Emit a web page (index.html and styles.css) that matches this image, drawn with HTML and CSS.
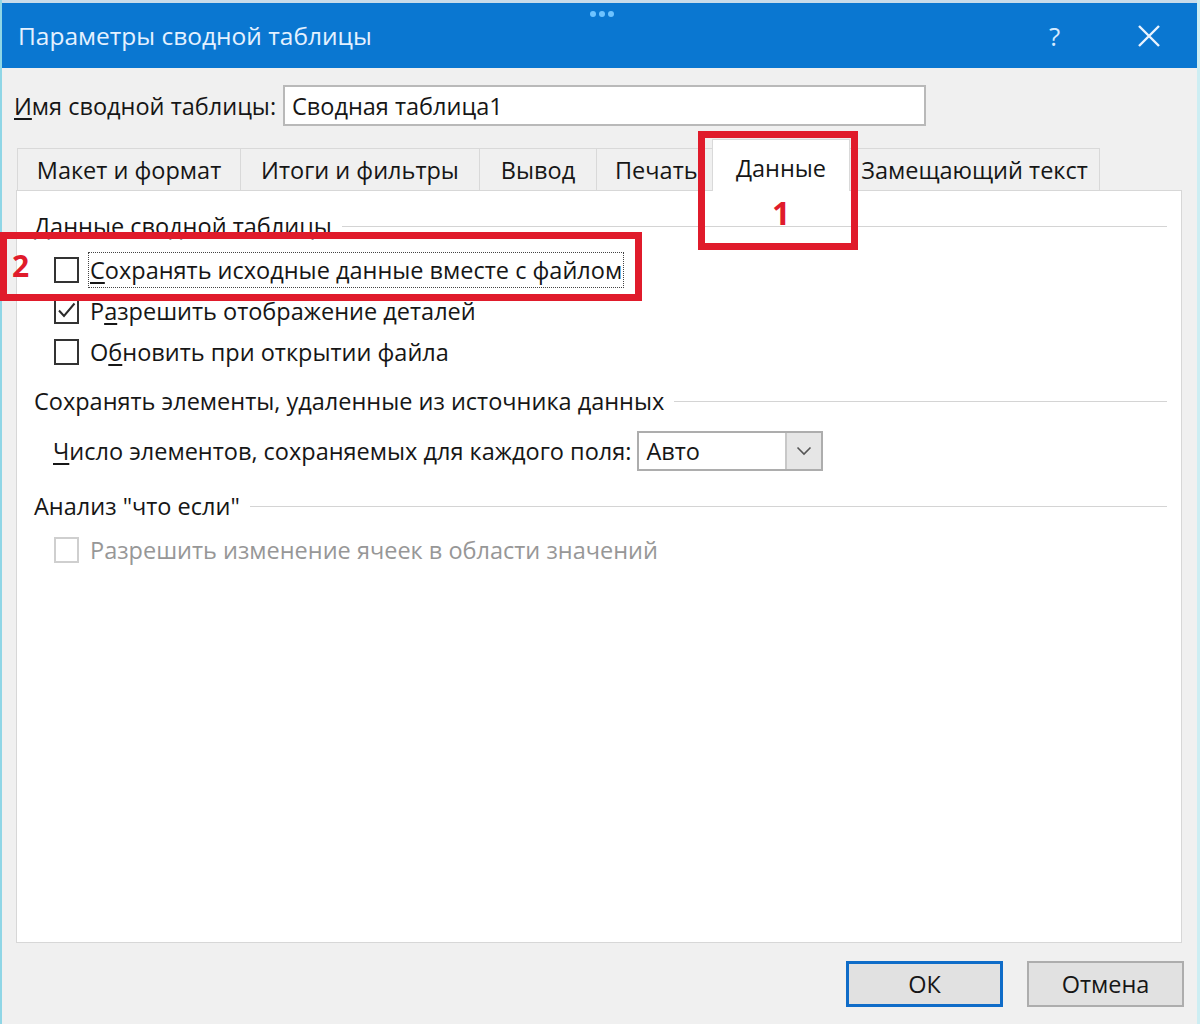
FILE: index.html
```html
<!DOCTYPE html>
<html lang="ru">
<head>
<meta charset="utf-8">
<title>Параметры сводной таблицы</title>
<link rel="stylesheet" href="styles.css">
</head>
<body>
<div class="window">
  <div class="titlebar">
    <span class="title">Параметры сводной таблицы</span>
    <span class="dots"><i></i><i></i><i></i></span>
    <span class="tb-help">?</span>
    <span class="tb-close">
      <svg width="24" height="24" viewBox="0 0 24 24"><path d="M2 2 L22 22 M22 2 L2 22" stroke="#eaf4ff" stroke-width="2.4" fill="none"/></svg>
    </span>
  </div>

  <div class="name-row">
    <span class="name-label"><u>И</u>мя сводной таблицы:</span>
    <div class="name-input">Сводная таблица1</div>
  </div>

  <div class="tabs">
    <div class="tab t1">Макет и формат</div>
    <div class="tab t2">Итоги и фильтры</div>
    <div class="tab t3">Вывод</div>
    <div class="tab t4">Печать</div>
    <div class="tab active">Данные</div>
    <div class="tab t6">Замещающий текст</div>
  </div>

  <div class="panel">
    <div class="group-head"><span>Данные сводной таблицы</span><i class="rule"></i></div>
    <div class="check-row first">
      <span class="box"></span>
      <span class="label focus"><u>С</u>охранять исходные данные вместе с файлом</span>
    </div>
    <div class="check-row">
      <span class="box"><svg width="21" height="21" viewBox="0 0 21 21"><path d="M3 10.5 L8 16 L18.5 3.5" stroke="#2b2b2b" stroke-width="2" fill="none"/></svg></span>
      <span class="label">Р<u>а</u>зрешить отображение деталей</span>
    </div>
    <div class="check-row">
      <span class="box"></span>
      <span class="label">О<u>б</u>новить при открытии файла</span>
    </div>

    <div class="group-head g2"><span>Сохранять элементы, удаленные из источника данных</span><i class="rule"></i></div>
    <div class="select-row">
      <span class="label"><u>Ч</u>исло элементов, сохраняемых для каждого поля:</span>
      <div class="select">
        <span class="select-val">Авто</span>
        <span class="select-btn"><svg width="16" height="10" viewBox="0 0 16 10"><path d="M1.5 1.5 L8 8 L14.5 1.5" stroke="#555" stroke-width="1.6" fill="none"/></svg></span>
      </div>
    </div>

    <div class="group-head g3"><span>Анализ "что если"</span><i class="rule"></i></div>
    <div class="check-row disabled">
      <span class="box"></span>
      <span class="label">Разрешить изменение ячеек в области значений</span>
    </div>
  </div>

  <div class="footer">
    <div class="btn ok">ОК</div>
    <div class="btn">Отмена</div>
  </div>

  <div class="mark mark1"><span>1</span></div>
  <div class="mark mark2"></div>
  <span class="mark-num2">2</span>
</div>
</body>
</html>
```

FILE: styles.css
```css
* { box-sizing: border-box; }
html, body { margin: 0; padding: 0; }
body {
  width: 1200px;
  height: 1024px;
  overflow: hidden;
  background: #f0f0f0;
  font-family: "Open Sans", "Noto Sans", sans-serif;
  font-size: 23.5px;
  color: #161616;
}
u { text-decoration: underline; text-underline-offset: 3px; text-decoration-thickness: 2px; }

.window {
  position: relative;
  height: 1024px;
  border-left: 2px solid #8fd6e6;
  border-right: 3px solid #cdeef3;
  display: flex;
  flex-direction: column;
}

.titlebar {
  position: relative;
  height: 68px;
  background: #0a77d1;
  border-top: 3px solid #c9dcea;
  display: flex;
  align-items: center;
  padding-left: 16px;
  color: #e4f1ff;
}
.title { font-size: 24.5px; flex: 1; }
.dots {
  position: absolute;
  left: 588px;
  top: 8px;
  display: flex;
  gap: 3px;
}
.dots i { width: 6px; height: 6px; border-radius: 50%; background: #6ec3ff; display: block; }
.tb-help { font-size: 26px; width: 20px; margin-right: 68px; color: #d6ebff; }
.tb-close { width: 24px; margin-right: 36px; display: flex; }

.name-row {
  display: flex;
  align-items: center;
  margin-top: 17px;
  padding-left: 12px;
}
.name-label { width: 269px; white-space: nowrap; }
.name-input {
  width: 643px;
  height: 41px;
  background: #fff;
  border: 2px solid #b9b9b9;
  padding-left: 7px;
  display: flex;
  align-items: center;
}

.tabs {
  display: flex;
  align-items: flex-end;
  margin-top: 12px;
  padding-left: 15px;
  height: 52px;
}
.tab {
  height: 42px;
  border: 1px solid #d9d9d9;
  border-bottom: none;
  background: #f0f0f0;
  display: flex;
  align-items: center;
  justify-content: center;
  margin-right: -1px;
  white-space: nowrap;
}
.t1 { width: 224px; }
.t2 { width: 240px; }
.t3 { width: 118px; }
.t4 { width: 117px; justify-content: flex-start; padding-left: 18px; }
.tab.active {
  height: 52px;
  width: 138px;
  background: #fff;
  align-items: flex-start;
  padding-top: 12px;
  position: relative;
  z-index: 1;
  margin-bottom: -1px;
}
.t6 { width: 251px; }

.panel {
  margin: 0 15px 0 14px;
  height: 753px;
  background: #fff;
  border: 1px solid #d7d7d7;
  padding: 20px 14px 0 17px;
  display: flex;
  flex-direction: column;
}
.group-head {
  display: flex;
  align-items: center;
  height: 30px;
}
.group-head .rule { flex: 1; height: 1px; background: #d4d4d4; margin-left: 10px; }
.check-row {
  display: flex;
  align-items: center;
  height: 41px;
  padding-left: 20px;
}
.check-row.first { margin-top: 8px; }
.box {
  width: 25px;
  height: 26px;
  border: 2px solid #333;
  background: #fff;
  margin-right: 11px;
  display: flex;
  align-items: center;
  justify-content: center;
}
.label { white-space: nowrap; }
.label.focus { outline: 1px dotted #444; outline-offset: 1px; }
.check-row.disabled { color: #979797; margin-top: 8px; }
.check-row.disabled .box { border-color: #cfcfcf; }

.g2 { margin-top: 14px; }
.select-row {
  display: flex;
  align-items: center;
  padding-left: 19px;
  margin-top: 15px;
}
.select-row .label { margin-right: 6px; }
.select {
  width: 186px;
  height: 40px;
  border: 2px solid #adadad;
  background: #fff;
  display: flex;
}
.select-val { flex: 1; padding-left: 7px; display: flex; align-items: center; }
.select-btn {
  width: 36px;
  background: #e6e6e6;
  border-left: 2px solid #c8c8c8;
  display: flex;
  align-items: center;
  justify-content: center;
}
.g3 { margin-top: 20px; }

.footer {
  display: flex;
  justify-content: flex-end;
  gap: 24px;
  padding: 18px 13px 0 0;
}
.btn {
  width: 157px;
  height: 46px;
  background: #e1e1e1;
  border: 2px solid #adadad;
  display: flex;
  align-items: center;
  justify-content: center;
}
.btn.ok { border: 3px solid #0f6cc8; }

.mark {
  position: absolute;
  border: 7px solid #e01b2b;
  z-index: 5;
}
.mark1 { left: 696px; top: 131px; width: 160px; height: 119px; }
.mark1 span {
  position: absolute;
  left: 67px;
  top: 59px;
  color: #e01b2b;
  font-size: 32px;
  font-weight: 700;
  line-height: 1;
}
.mark2 { left: -2px; top: 232px; width: 642px; height: 69px; }
.mark-num2 {
  position: absolute;
  left: 10px;
  top: 251px;
  color: #e01b2b;
  font-size: 30px;
  font-weight: 700;
  line-height: 1;
  z-index: 6;
}
```
